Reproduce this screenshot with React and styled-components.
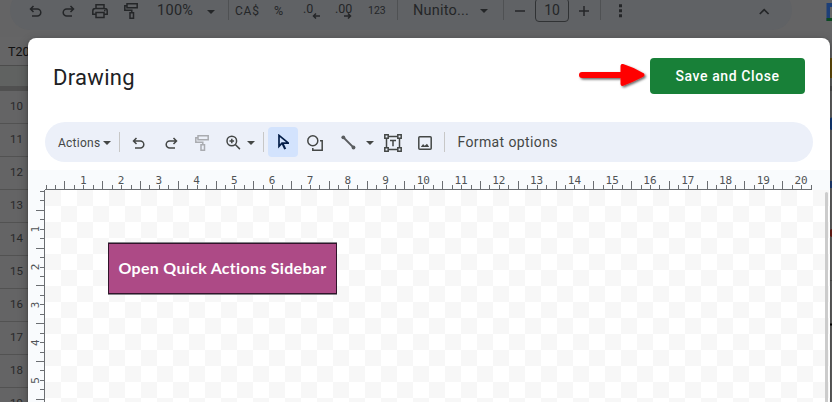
import React from "react";
import styled, { createGlobalStyle } from "styled-components";

const sans = `Roboto, "Noto Sans", sans-serif`;

const GlobalStyle = createGlobalStyle`
  * { box-sizing: border-box; }
  body { margin: 0; overflow: hidden; font-family: ${sans}; }
`;

const Screen = styled.main`
  position: relative;
  width: 832px;
  height: 402px;
  overflow: hidden;
  background: #646465;
`;

/* Places a toolbar item, vertically centred, at an offset along its bar. */
const Slot = styled.div`
  grid-area: 1 / 1;
  justify-self: start;
  align-self: center;
  display: flex;
  align-items: center;
  margin-left: ${(p) => p.$x}px;
  margin-top: ${(p) => p.$dy || 0}px;
  white-space: pre;
  line-height: 1;
  color: ${(p) => p.$color || "#242628"};
  font-size: ${(p) => p.$size || 14}px;
  font-weight: ${(p) => p.$weight || 450};
  letter-spacing: ${(p) => p.$track || 0}px;
`;

const SheetBar = styled.div`
  display: grid;
  width: 782px;
  height: 40px;
  margin: -10px 0 0 10px;
  padding-top: 3px;
  background: #606265;
  border-radius: 20px;
`;

const Rule = styled.div`
  width: 1px;
  height: 20px;
  background: ${(p) => p.$color};
`;

const Caret = styled.div`
  border: 4px solid transparent;
  border-top-color: currentColor;
  border-bottom: 0;
`;

const SizeBox = styled.div`
  display: grid;
  place-items: center;
  width: 34px;
  height: 24px;
  border: 1px solid #303234;
  border-radius: 4px;
`;

const NameBox = styled.div`
  height: 29px;
  margin-top: 7px;
  padding: 7px 0 0 8px;
  background: #656566;
  border-bottom: 1px solid #4c4c4c;
  font-size: 12.5px;
  line-height: 15px;
  color: #111;
`;

const ColumnHeader = styled.div`
  height: 25px;
  background: #606261;
  border-bottom: 5px solid #505050;
`;

const SheetRow = styled.div`
  display: flex;
  align-items: center;
  width: 28px;
  height: 33px;
  padding: 0 0 3px 10px;
  border-bottom: 1px solid #525252;
  font-size: 11.5px;
  color: #28292a;
`;

const SidePanel = styled.svg`
  position: absolute;
  top: 0;
  right: 0;
`;

const Dialog = styled.section`
  position: absolute;
  left: 28px;
  top: 38px;
  width: 802px;
  height: 380px;
  background: #fff;
  border-radius: 8px 8px 0 0;
  box-shadow: 0 4px 8px 3px rgba(0, 0, 0, 0.15), 0 1px 3px rgba(0, 0, 0, 0.3);
  overflow: clip;
`;

const Header = styled.header`
  display: flex;
  align-items: center;
  height: 84px;
  padding: 0 25px 8px;
`;

const Title = styled.h1`
  flex: 1;
  margin: 3px 0 0;
  font: 380 22px/28px ${sans};
  letter-spacing: 0.3px;
  color: #202124;
`;

const ArrowSvg = styled.svg`
  overflow: visible;
`;

const SaveButton = styled.button`
  width: 155px;
  height: 36px;
  margin-left: 3px;
  padding: 0;
  border: 0;
  border-radius: 4px;
  background: #188038;
  color: #fff;
  font: 500 14px ${sans};
  letter-spacing: 0.6px;
`;

const DrawBar = styled.div`
  display: grid;
  width: 768px;
  height: 40px;
  margin-left: 17px;
  background: #ecf0f9;
  border-radius: 20px;
`;

const ToolActive = styled.div`
  display: grid;
  place-items: center;
  width: 30px;
  height: 30px;
  border-radius: 4px;
  background: #d3e3fd;
  color: #041e49;
`;

const Workspace = styled.div`
  display: grid;
  grid-template: 20px 1fr / 17px 1fr;
  height: 240px;
  margin-top: 8px;
  background: #f9fbfd;
`;

const RulerSvg = styled.svg`
  display: block;
  font: 11px "DejaVu Sans Mono", monospace;
  fill: #505356;
  ${(p) => p.$across && "grid-column: 1 / 3;"}
`;

const Canvas = styled.div`
  position: relative;
  background: repeating-conic-gradient(#fff 0 25%, #f7f7f7 0 50%) 0 0 / 32px 32px;
`;

const ScrollThumb = styled.div`
  position: absolute;
  right: 2px;
  top: 2px;
  width: 3px;
  height: 230px;
  background: #ccc;
  border-radius: 2px;
`;

const Shape = styled.div`
  position: absolute;
  left: 63px;
  top: 53px;
  display: grid;
  place-items: center;
  width: 229px;
  height: 51px;
  padding-bottom: 2px;
  border: 1px solid #30142a;
  box-shadow: 0 -1px #85858a, 0 1px #85858a;
  background: #ad4a86;
  color: #fff;
  font: 700 16px Lato, sans-serif;
  letter-spacing: 0.3px;
  white-space: nowrap;
`;

const icons = {
  undo: <path d="M5.5 2 2.5 5l3 3M2.5 5h6.8a3.5 3.5 0 0 1 0 7H4" />,
  redo: <path d="m10.5 2 3 3-3 3M13.5 5H6.7a3.5 3.5 0 0 0 0 7H12" />,
  print: <path d="M4 5V1.8h8V5M4 11.2H.8V8q0-2.5 2.5-2.5h9.4q2.5 0 2.5 2.5v3.2H12M4 9.5h8v5H4zM12 7.5h1.5" />,
  paint: <path d="M3 .8h10.2v4H3zM3 2.7H.8v4.6h7v2.5M6 9.8h3.5v5.4H6z" />,
  zoom: (
    <>
      <circle cx="5.8" cy="6" r="4.8" />
      <path d="m9.3 9.5 4.6 4.6M5.8 3.7v4.6M3.5 6h4.6" />
    </>
  ),
  cursor: (
    <>
      <path d="M2 1.4v11L5 9.2h6.5z" />
      <path d="m5.6 9.6 2.6 5.5" strokeWidth="2.2" />
    </>
  ),
  shapes: (
    <>
      <circle cx="5.8" cy="5.8" r="5" />
      <path d="M13 5.8h2.2v9.4H5.8V13" />
    </>
  ),
  line: (
    <>
      <path d="m2.5 2.5 10 10" strokeWidth="1.8" />
      <circle cx="2.3" cy="2.3" r="1.9" fill="currentColor" stroke="none" />
      <circle cx="12.5" cy="12.5" r="1.9" fill="currentColor" stroke="none" />
    </>
  ),
  text: (
    <>
      <path d="M4.5 2.5h9M4.5 15.5h9M2.5 4.5v9M15.5 4.5v9M6 6.5h6M9 6.5v5.7" />
      <path d="M.8.8h3.4v3.4H.8zM13.8.8h3.4v3.4h-3.4zM.8 13.8h3.4v3.4H.8zM13.8 13.8h3.4v3.4h-3.4z" />
    </>
  ),
  image: (
    <>
      <rect x=".8" y=".8" width="12.4" height="12.4" rx="1" />
      <path d="m2.8 11 2.3-3 1.5 1.8 1.3-1L9 7.8 11.2 11z" fill="currentColor" stroke="none" />
    </>
  ),
  minus: <path d="M0 5h10" />,
  plus: <path d="M0 5h10M5 0v10" />,
  up: <path d="m.8 6 4.4-4.4L9.6 6" />,
  left: <path d="M8 3H1.5M4 .5 1.5 3 4 5.5" />,
  right: <path d="M0 3h6.5M4 .5 6.5 3 4 5.5" />,
  dots: <path d="M0 1.8h3M0 6.8h3M0 11.8h3" strokeWidth="3" />,
};

const sizes = {
  paint: [15, 17], cursor: [12, 16], line: [15, 15], text: [18, 18], image: [14, 14],
  minus: [10, 10], plus: [10, 10], up: [11, 7], left: [8, 6], right: [8, 6], dots: [3, 14],
};

const Icon = ({ name, sw = 1.5 }) => {
  const [w, h] = sizes[name] || [16, 16];
  return (
    <svg width={w} height={h} viewBox={`0 0 ${w} ${h}`} fill="none" stroke="currentColor" strokeWidth={sw}>
      {icons[name]}
    </svg>
  );
};

const Arrow = () => (
  <ArrowSvg width="68" height="28" viewBox="0 0 68 28">
    <defs>
      <filter id="arrow-shadow" x="-20%" y="-30%" width="150%" height="180%">
        <feDropShadow dx="1.5" dy="1.5" stdDeviation="1.2" floodOpacity=".6" />
      </filter>
    </defs>
    <g fill="#f00" stroke="#f00" strokeLinejoin="round" strokeLinecap="round" filter="url(#arrow-shadow)">
      <path d="M3 13h42" strokeWidth="6" />
      <path d="M43.5 4v18q10-4 20-9Q54 7.300 43.500 4z" strokeWidth="4" />
    </g>
  </ArrowSvg>
);

const UNIT = 37.78;
const HRuler = () => (
  <RulerSvg $across width="802" height="20">
    <path d="M17 19.5h767" stroke="#6b6e72" />
    {Array.from({ length: 82 }, (_, i) => {
      const x = Math.floor(18 + i * (UNIT / 4)) + 0.5;
      return <path key={i} d={`M${x} ${i % 4 === 2 ? 11 : 15}V19`} stroke="#6b6e72" />;
    })}
    {Array.from({ length: 20 }, (_, i) => (
      <text key={i} x={17.5 + (i + 1) * UNIT} y="14" textAnchor="middle">{i + 1}</text>
    ))}
  </RulerSvg>
);

const VRuler = () => (
  <RulerSvg width="17" height="220">
    <path d="M16.5 0v220" stroke="#6b6e72" />
    {Array.from({ length: 23 }, (_, i) => {
      const y = Math.floor(1.5 + i * (UNIT / 4)) + 0.5;
      return <path key={i} d={`M${i % 4 === 2 ? 8 : 12} ${y}H16`} stroke="#6b6e72" />;
    })}
    {Array.from({ length: 5 }, (_, i) => (
      <text key={i} transform={`translate(11 ${1.5 + (i + 1) * UNIT}) rotate(-90)`} textAnchor="middle">{i + 1}</text>
    ))}
  </RulerSvg>
);

const SheetTools = () => (
  <SheetBar>
    <Slot $x={18}><Icon name="undo" /></Slot>
    <Slot $x={50}><Icon name="redo" /></Slot>
    <Slot $x={82} $dy={-1}><Icon name="print" /></Slot>
    <Slot $x={114}><Icon name="paint" /></Slot>
    <Slot $x={147} $size={14.5} $track={0.3}>100%</Slot>
    <Slot $x={197}><Caret /></Slot>
    <Slot $x={218} $dy={-3}><Rule $color="#4f5153" /></Slot>
    <Slot $x={225} $dy={-2} $size={12} $track={0.8}>CA$</Slot>
    <Slot $x={264} $dy={-1} $size={12.5}>%</Slot>
    <Slot $x={293} $dy={-5} $size={12.5}>.0</Slot>
    <Slot $x={302} $dy={9}><Icon name="left" /></Slot>
    <Slot $x={325} $dy={-5} $size={12.5}>.00</Slot>
    <Slot $x={334} $dy={9}><Icon name="right" /></Slot>
    <Slot $x={358} $size={10.5}>123</Slot>
    <Slot $x={387} $dy={-3}><Rule $color="#4f5153" /></Slot>
    <Slot $x={403} $size={14.5} $track={0.2}>Nunito...</Slot>
    <Slot $x={470} $dy={-1}><Caret /></Slot>
    <Slot $x={493} $dy={-3}><Rule $color="#4f5153" /></Slot>
    <Slot $x={505} $dy={-2}><Icon name="minus" /></Slot>
    <Slot $x={525} $dy={-3}><SizeBox>10</SizeBox></Slot>
    <Slot $x={569} $dy={-2}><Icon name="plus" /></Slot>
    <Slot $x={590} $dy={-3}><Rule $color="#4f5153" /></Slot>
    <Slot $x={609} $dy={-1}><Icon name="dots" /></Slot>
    <Slot $x={749} $dy={-1}><Icon name="up" sw={1.7} /></Slot>
  </SheetBar>
);

const ink = "#444746";

const DrawTools = () => (
  <DrawBar>
    <Slot $x={13} $dy={1} $color={ink} $size={12} $track={0.25}>Actions</Slot>
    <Slot $x={58} $dy={1} $color={ink}><Caret /></Slot>
    <Slot $x={74}><Rule $color="#c7c7c7" /></Slot>
    <Slot $x={86} $dy={3} $color={ink}><Icon name="undo" /></Slot>
    <Slot $x={118} $dy={3} $color={ink}><Icon name="redo" /></Slot>
    <Slot $x={150} $dy={2} $color="#a9abb0"><Icon name="paint" /></Slot>
    <Slot $x={181} $dy={1} $color={ink}><Icon name="zoom" /></Slot>
    <Slot $x={202} $dy={1} $color={ink}><Caret /></Slot>
    <Slot $x={218}><Rule $color="#c7c7c7" /></Slot>
    <Slot $x={223}><ToolActive><Icon name="cursor" sw={1.7} /></ToolActive></Slot>
    <Slot $x={262} $dy={2} $color={ink}><Icon name="shapes" /></Slot>
    <Slot $x={296} $color="#5a5d60"><Icon name="line" /></Slot>
    <Slot $x={321} $dy={1} $color={ink}><Caret /></Slot>
    <Slot $x={339} $dy={1} $color={ink}><Icon name="text" /></Slot>
    <Slot $x={373} $dy={2} $color={ink}><Icon name="image" /></Slot>
    <Slot $x={399}><Rule $color="#c7c7c7" /></Slot>
    <Slot $x={412.5} $color={ink} $track={0.38}>Format options</Slot>
  </DrawBar>
);

const AddOns = () => (
  <SidePanel width="8" height="402">
    <path d="M2.500 3h5.500v18H2.500z" fill="#1d3f78" />
    <path d="M6 7h2v11H6z" fill="#666" />
    <path d="M2.500 18H8v3H2.500z" fill="#0c4a20" />
    <path d="M5 58h3v20H5z" fill="#67500b" />
    <path d="M8 117.500Q5.500 117.500 5.500 120v7q0 3 2.500 3z" fill="#143d7a" />
    <path d="M5 181h3v7H5z" fill="#203f78" />
    <circle cx="9" cy="233" r="4" fill="#702019" />
    <path d="M5 280.500h3" stroke="#505050" />
    <path d="M5 324.500h3" stroke="#000" strokeWidth="2" />
  </SidePanel>
);

export default function App() {
  return (
    <Screen>
      <GlobalStyle />
      <SheetTools />
      <NameBox>T20</NameBox>
      <ColumnHeader />
      {[10, 11, 12, 13, 14, 15, 16, 17, 18, 19].map((n) => <SheetRow key={n}>{n}</SheetRow>)}
      <AddOns />
      <Dialog>
        <Header>
          <Title>Drawing</Title>
          <Arrow />
          <SaveButton>Save and Close</SaveButton>
        </Header>
        <DrawTools />
        <Workspace>
          <HRuler />
          <VRuler />
          <Canvas>
            <Shape>Open Quick Actions Sidebar</Shape>
            <ScrollThumb />
          </Canvas>
        </Workspace>
      </Dialog>
    </Screen>
  );
}
